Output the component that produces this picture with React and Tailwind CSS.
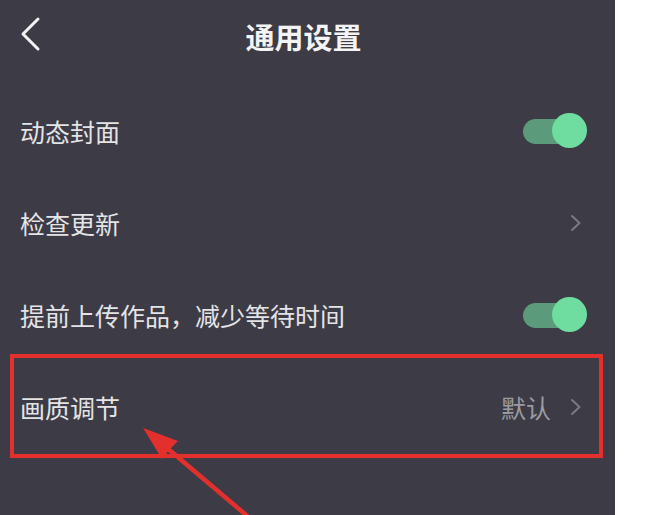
import React from "react";

const font = { fontFamily: '"Noto Sans CJK SC", "Noto Sans", sans-serif' };

function Toggle() {
  return (
    <div className="relative w-[64px] h-[36px] flex items-center">
      <div className="w-[46px] h-[25px] rounded-full bg-[#5b9a7b]" />
      <div className="absolute right-0 top-0 w-[35px] h-[35px] rounded-full bg-[#6fdca0]" />
    </div>
  );
}

function Chevron() {
  return (
    <svg width="12" height="18" viewBox="0 0 12 18" fill="none">
      <path d="M2 2 L9.5 9 L2 16" stroke="#7a7a82" strokeWidth="2" strokeLinecap="round" strokeLinejoin="round" />
    </svg>
  );
}

function Row({ label, right }) {
  return (
    <div className="h-[92px] flex items-center justify-between pl-[20px]">
      <span className="text-[25px] text-[#e4e4e6] leading-none">{label}</span>
      {right}
    </div>
  );
}

export default function App() {
  return (
    <div className="w-[672px] h-[515px] flex bg-white overflow-hidden" style={font}>
      <div className="relative w-[615px] h-[515px] bg-[#3c3b46] flex flex-col">
        <div className="relative h-[74px] flex items-center justify-center">
          <svg className="absolute left-[18px] top-[16px]" width="26" height="38" viewBox="0 0 26 38" fill="none">
            <path d="M20 3 L5 18 L20 33" stroke="#f2f2f2" strokeWidth="3" strokeLinecap="round" strokeLinejoin="round" />
          </svg>
          <span className="text-[29px] font-bold text-[#f4f4f4] leading-none ml-[-8px] mt-[-2px]">通用设置</span>
        </div>
        <div className="mt-[11px] flex flex-col">
          <Row label="动态封面" right={<div className="pr-[28px]"><Toggle /></div>} />
          <Row label="检查更新" right={<div className="pr-[33px] flex items-center"><Chevron /></div>} />
          <Row label="提前上传作品，减少等待时间" right={<div className="pr-[28px]"><Toggle /></div>} />
          <Row
            label="画质调节"
            right={
              <div className="pr-[33px] flex items-center gap-[19px]">
                <span className="text-[25px] text-[#9b9ba2] leading-none">默认</span>
                <Chevron />
              </div>
            }
          />
        </div>
        <div className="absolute left-[10px] top-[354px] w-[593px] h-[104px] border-[4px] border-[#e3302c]" />
        <svg className="absolute left-0 top-0" width="615" height="515" viewBox="0 0 615 515" fill="none">
          <line x1="160" y1="442" x2="252" y2="520" stroke="#e3302c" strokeWidth="4.5" />
          <path d="M143 428 L178 441 L170 449 L162 459 Z" fill="#e3302c" />
        </svg>
      </div>
    </div>
  );
}
